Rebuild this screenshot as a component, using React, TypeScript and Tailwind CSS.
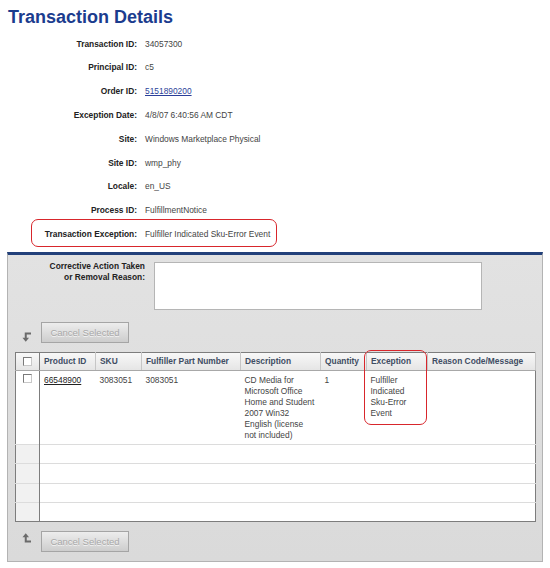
const details = [
  { label: 'Transaction ID:', value: '34057300' },
  { label: 'Principal ID:', value: 'c5' },
  { label: 'Order ID:', value: '5151890200', link: true },
  { label: 'Exception Date:', value: '4/8/07 6:40:56 AM CDT' },
  { label: 'Site:', value: 'Windows Marketplace Physical' },
  { label: 'Site ID:', value: 'wmp_phy' },
  { label: 'Locale:', value: 'en_US' },
  { label: 'Process ID:', value: 'FulfillmentNotice' },
  { label: 'Transaction Exception:', value: 'Fulfiller Indicated Sku-Error Event' },
]

const columns = ['Product ID', 'SKU', 'Fulfiller Part Number', 'Description', 'Quantity', 'Exception', 'Reason Code/Message']

function Checkbox() {
  return (
    <span className="mx-auto block h-[9px] w-[9px] border border-[#7a7a7a] border-r-[#c8c8c8] border-b-[#c8c8c8] bg-white" />
  )
}

function CancelButton() {
  return (
    <button
      disabled
      className="h-[21px] w-[88px] border border-[#a5a5a5] bg-linear-to-b from-[#ededed] to-[#cdcdcd] text-[9.5px] text-[#a8a8a8] [text-shadow:0_1px_0_#f4f4f4]"
    >
      Cancel Selected
    </button>
  )
}

function ArrowIcon({ up }: { up?: boolean }) {
  return (
    <svg width="10" height="10" viewBox="0 0 10 10" className="text-[#6b6b6b]">
      {up ? (
        <>
          <polygon points="0.5,4.2 7,4.2 3.75,0.3" fill="currentColor" />
          <path d="M3.75 4 V8.5 H9" fill="none" stroke="currentColor" strokeWidth="2" />
        </>
      ) : (
        <>
          <path d="M9 1.5 H3.75 V6" fill="none" stroke="currentColor" strokeWidth="2" />
          <polygon points="0.5,5.8 7,5.8 3.75,9.7" fill="currentColor" />
        </>
      )}
    </svg>
  )
}

export default function App() {
  return (
    <div className="relative h-[568px] w-[550px] overflow-hidden bg-white font-['Liberation_Sans',Arial,sans-serif] text-[#444]">
      <h1 className="pl-[8px] pt-[8px] text-[18px] leading-[18px] font-bold text-[#1b3c8e]">Transaction Details</h1>

      {/* details */}
      <div className="mt-[6px] text-[8.4px]">
        {details.map((d) => (
          <div key={d.label} className="flex h-[23.8px] items-center">
            <div className="w-[137px] text-right font-bold text-[#222]">{d.label}</div>
            <div className="pl-[8px]">
              {d.link ? <a className="text-[#2b3f99] underline">{d.value}</a> : d.value}
            </div>
          </div>
        ))}
      </div>

      {/* exception panel */}
      <div className="mx-[7px] mt-[6px] w-[536px] border-x border-b border-t-[3px] border-[#b3b3b3] border-t-[#22407a] bg-linear-to-b from-[#e2e2e2] to-[#dadada] px-[7px] pt-[7px] pb-[9px]">
        <div className="flex items-start">
          <div className="-mt-[1px] w-[130px] text-right text-[8.4px] leading-[11px] font-bold text-[#222]">
            Corrective Action Taken
            <br />
            or Removal Reason:
          </div>
          <textarea className="ml-[9px] h-[48px] w-[328px] resize-none border border-[#b5b5b5] bg-white" />
        </div>

        <div className="mt-[12px] flex items-end">
          <div className="mb-[1px] w-[26px] pl-[7px]">
            <ArrowIcon />
          </div>
          <CancelButton />
        </div>

        <table className="mt-[9px] w-[520px] table-fixed border-collapse border border-[#7d7d7d] text-[8.4px] leading-[11px]">
          <colgroup>
            <col className="w-[24px]" />
            <col className="w-[56px]" />
            <col className="w-[46px]" />
            <col className="w-[99px]" />
            <col className="w-[80px]" />
            <col className="w-[46px]" />
            <col className="w-[61px]" />
            <col className="w-[108px]" />
          </colgroup>
          <thead>
            <tr className="h-[18px] bg-linear-to-b from-[#f8f8f8] to-[#e4e4e4]">
              <th className="border-r border-b border-r-[#7d7d7d] border-b-[#a8a8a8]">
                <Checkbox />
              </th>
              {columns.map((c) => (
                <th
                  key={c}
                  className="border-r border-b border-r-[#c6c6c6] border-b-[#a8a8a8] px-[4px] text-left font-bold whitespace-nowrap text-[#3f4d63]"
                >
                  {c}
                </th>
              ))}
            </tr>
          </thead>
          <tbody className="bg-white align-top">
            <tr className="h-[74px] border-b border-[#dcdcdc]">
              <td className="border-r border-[#7d7d7d] pt-[3px]">
                <Checkbox />
              </td>
              <td className="px-[4px] pt-[4px]">
                <a className="text-[#222] underline">66548900</a>
              </td>
              <td className="px-[4px] pt-[4px]">3083051</td>
              <td className="px-[4px] pt-[4px]">3083051</td>
              <td className="px-[4px] pt-[4px]">
                CD Media for
                <br />
                Microsoft Office
                <br />
                Home and Student
                <br />
                2007 Win32
                <br />
                English (license
                <br />
                not included)
              </td>
              <td className="px-[4px] pt-[4px]">1</td>
              <td className="px-[4px] pt-[4px]">
                Fulfiller
                <br />
                Indicated
                <br />
                Sku-Error
                <br />
                Event
              </td>
              <td className="px-[4px] pt-[4px]" />
            </tr>
            {[0, 1, 2, 3].map((i) => (
              <tr key={i} className="h-[19.25px] border-b border-[#dcdcdc] last:border-[#7d7d7d]">
                <td className="border-r border-[#7d7d7d] bg-[#f1f1f1]" />
                <td colSpan={7} />
              </tr>
            ))}
          </tbody>
        </table>

        <div className="mt-[9px] flex items-start">
          <div className="mt-[2px] w-[26px] pl-[7px]">
            <ArrowIcon up />
          </div>
          <CancelButton />
        </div>
      </div>

      {/* annotation boxes */}
      <div className="absolute top-[219px] left-[31px] h-[28px] w-[246px] rounded-[7px] border-[1.5px] border-[#d8262c]" />
      <div className="absolute top-[350px] left-[364px] h-[75px] w-[63px] rounded-[7px] border-[1.5px] border-[#d8262c]" />
    </div>
  )
}
